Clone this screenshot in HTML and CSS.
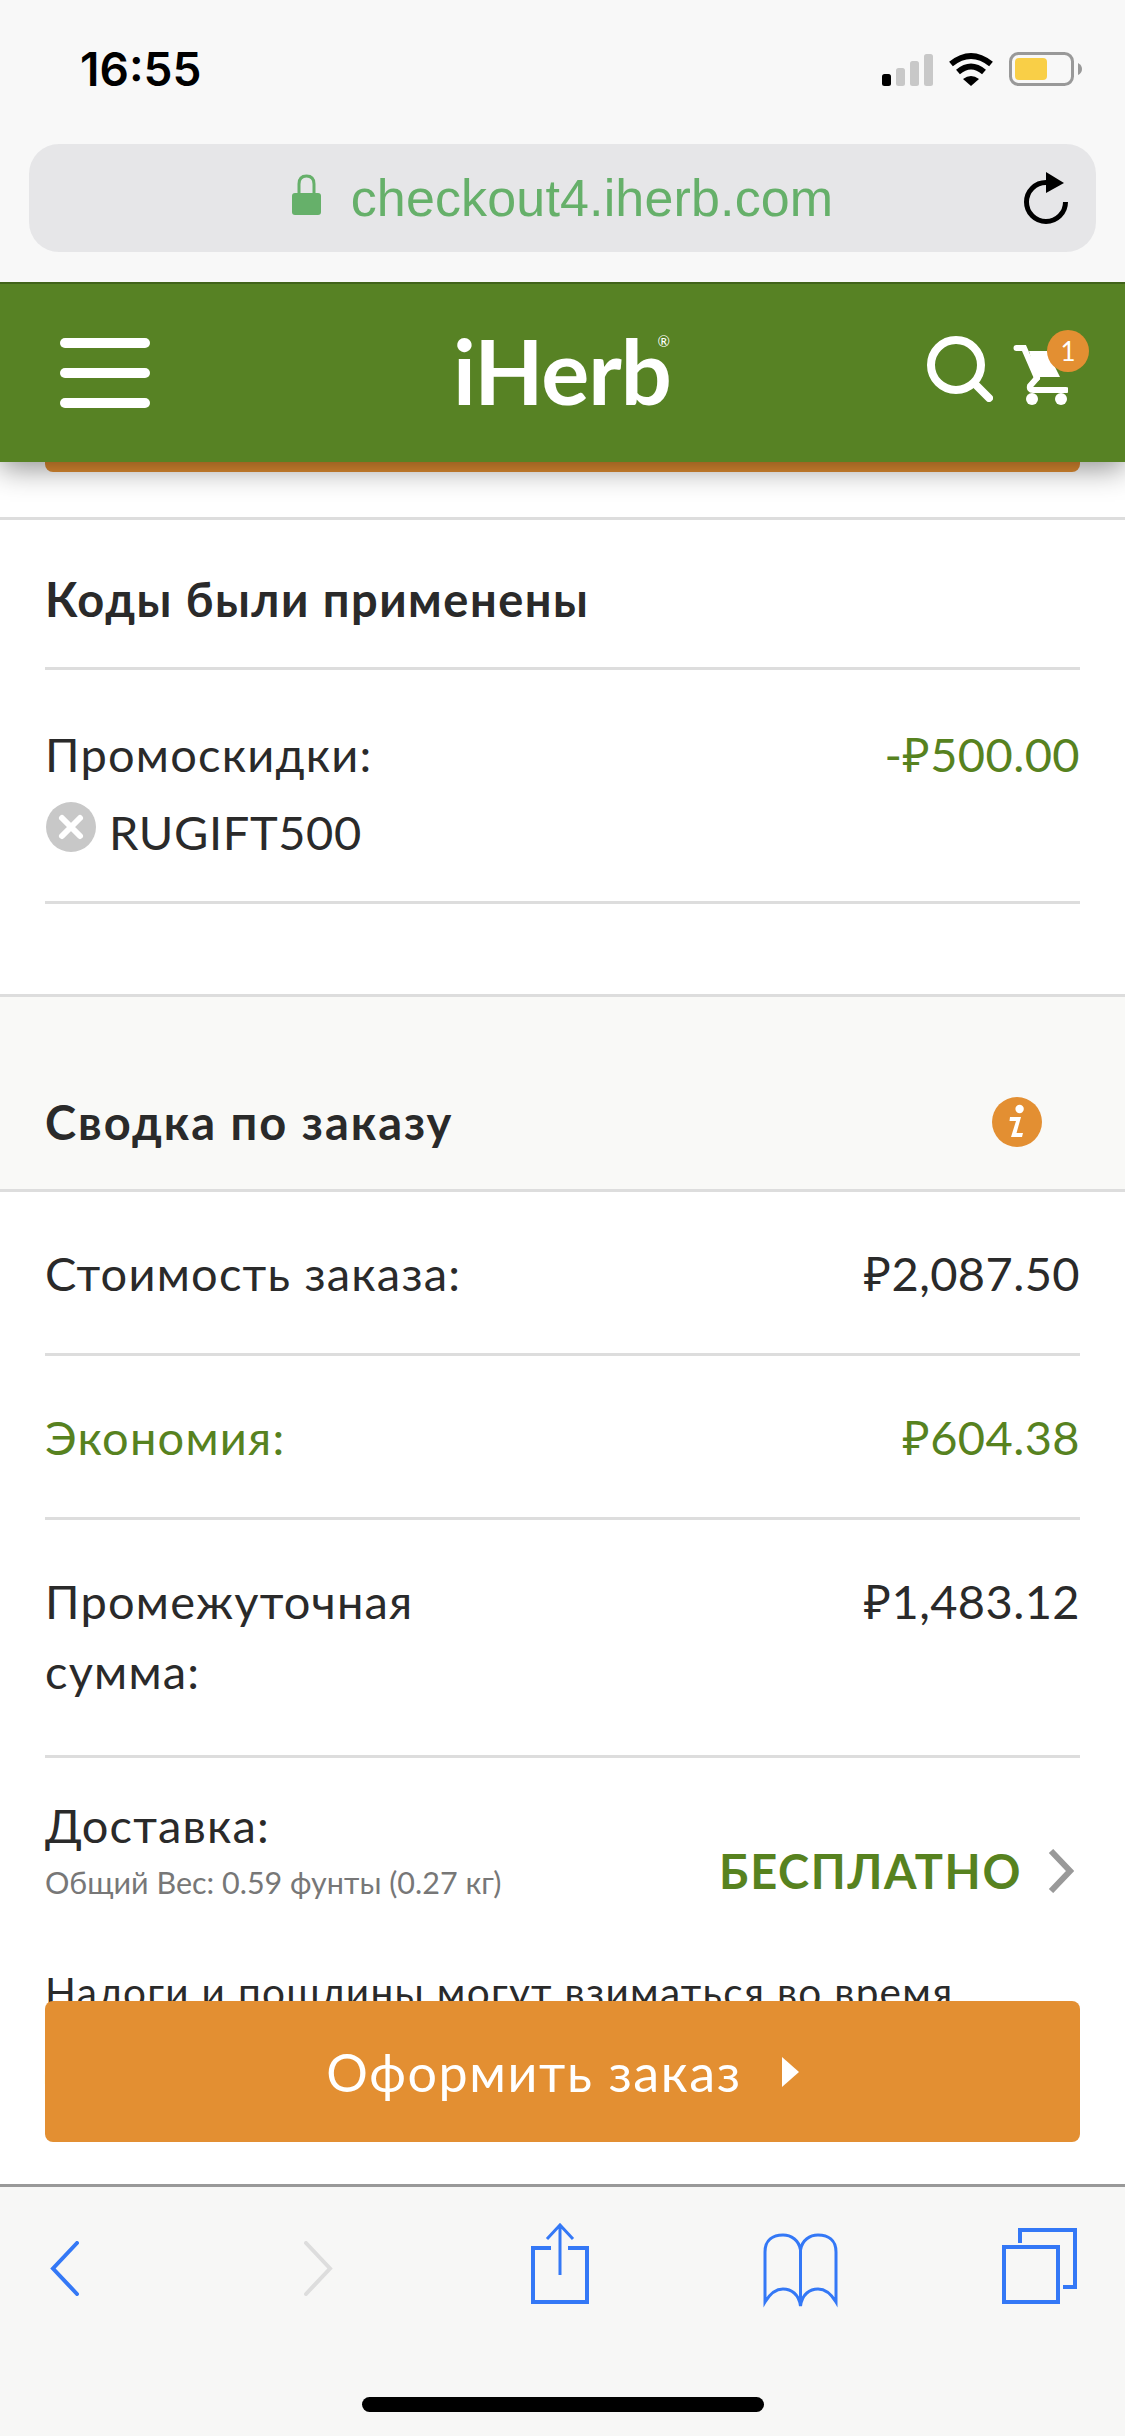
FILE: index.html
```html
<!DOCTYPE html>
<html lang="ru">
<head>
  <meta charset="UTF-8" />
  <meta name="viewport" content="width=device-width, initial-scale=1.0">
  <title>iHerb - Оформление заказа</title>
  <link rel="stylesheet" href="styles.css">
</head>
<body>
  <div class="phone">

    <!-- Barre du navigateur -->
    <div class="browser-top">
      <div class="status-bar">
        <span class="clock">16:55</span>
        <div class="status-icons">
          <svg width="51" height="32" viewBox="0 0 51 32">
            <rect x="0" y="20" width="9" height="12" rx="2.5" fill="#000"/>
            <rect x="14" y="14" width="9" height="18" rx="2.5" fill="#c8c8c8"/>
            <rect x="28" y="7" width="9" height="25" rx="2.5" fill="#c8c8c8"/>
            <rect x="42" y="0" width="9" height="32" rx="2.5" fill="#c8c8c8"/>
          </svg>
          <svg width="46" height="34" viewBox="0 0 46 34">
            <path d="M3 12 Q23 -4 43 12" fill="none" stroke="#000" stroke-width="6"/>
            <path d="M10 20 Q23 9 36 20" fill="none" stroke="#000" stroke-width="6"/>
            <path d="M15 27 Q23 21 31 27 L23 34 Z" fill="#000"/>
          </svg>
          <svg width="73" height="34" viewBox="0 0 73 34">
            <rect x="1.5" y="1.5" width="62" height="31" rx="8" fill="none" stroke="#999" stroke-width="3"/>
            <rect x="6" y="6" width="32" height="22" rx="4" fill="#f9cf47"/>
            <path d="M69 11 Q73 13 73 17 Q73 21 69 23 Z" fill="#999"/>
          </svg>
        </div>
      </div>
      <div class="url-bar">
        <div class="url">
          <svg class="lock" width="29" height="41" viewBox="0 0 29 41">
            <path d="M7 21 V10 Q7 2 14.5 2 Q22 2 22 10 V21" fill="none" stroke="#66b06a" stroke-width="3"/>
            <rect x="0" y="19" width="29" height="22" rx="3" fill="#66b06a"/>
          </svg>
          <span>checkout4.iherb.com</span>
        </div>
        <svg class="reload" width="48" height="54" viewBox="0 0 48 54">
          <path d="M24 10.5 A19.5 19.5 0 1 0 43.5 30" fill="none" stroke="#000" stroke-width="5"/>
          <path d="M24 0 L42 11 L24 21 Z" fill="#000"/>
        </svg>
      </div>
    </div>

    <!-- En-tete du site -->
    <header class="site-header">
      <div class="burger"><span></span><span></span><span></span></div>
      <div class="logo">iHerb<sup>®</sup></div>
      <div class="header-actions">
        <svg width="66" height="66" viewBox="0 0 66 66">
          <circle cx="29" cy="29" r="25" fill="none" stroke="#fff" stroke-width="8"/>
          <path d="M48 48 L62 62" stroke="#fff" stroke-width="8" stroke-linecap="round"/>
        </svg>
        <div class="cart">
          <svg width="56" height="62" viewBox="0 0 56 62">
            <path d="M4.5 3 H12 L25 33" fill="none" stroke="#fff" stroke-width="6" stroke-linecap="round"/>
            <path d="M17 6 H35 L48 32 H24 Z" fill="#fff"/>
            <path d="M25 33 L18 41 Q17 45 21 45 H54" fill="none" stroke="#fff" stroke-width="6" stroke-linecap="round"/>
            <circle cx="20" cy="54" r="6" fill="#fff"/>
            <circle cx="49" cy="54" r="6" fill="#fff"/>
          </svg>
          <span class="cart-badge">1</span>
        </div>
      </div>
    </header>

    <main class="content">
      <div class="peek-button"></div>

      <section class="codes">
        <h2 class="codes-title">Коды были применены</h2>
        <div class="promo">
          <div class="promo-text">
            <div class="label">Промоскидки:</div>
            <div class="promo-code">
              <svg width="50" height="50" viewBox="0 0 50 50">
                <circle cx="25" cy="25" r="25" fill="#c8c8c8"/>
                <path d="M16 16 L34 34 M34 16 L16 34" stroke="#fff" stroke-width="6" stroke-linecap="round"/>
              </svg>
              <span>RUGIFT500</span>
            </div>
          </div>
          <div class="green">-₽500.00</div>
        </div>
      </section>

      <section class="summary-head">
        <h2>Сводка по заказу</h2>
        <svg width="50" height="50" viewBox="0 0 50 50">
          <circle cx="25" cy="25" r="25" fill="#e38f32"/>
          <circle cx="27.6" cy="12" r="4.2" fill="#fff"/>
          <path d="M18 20 H29 L24.5 36 H31 L30 40 H19 L24 24 H17.5 Z" fill="#fff"/>
        </svg>
      </section>

      <div class="row">
        <span class="label">Стоимость заказа:</span>
        <span>₽2,087.50</span>
      </div>
      <div class="row green">
        <span class="label">Экономия:</span>
        <span>₽604.38</span>
      </div>
      <div class="row row-tall">
        <span class="label row-label">Промежуточная сумма:</span>
        <span>₽1,483.12</span>
      </div>
      <div class="shipping">
        <div>
          <div class="label">Доставка:</div>
          <div class="weight">Общий Вес: 0.59 фунты (0.27 кг)</div>
        </div>
        <div class="free">
          <span>БЕСПЛАТНО</span>
          <svg width="26" height="44" viewBox="0 0 26 44">
            <path d="M3 2 L22 22 L3 42" fill="none" stroke="#999" stroke-width="6"/>
          </svg>
        </div>
      </div>
      <p class="taxes">Налоги и пошлины могут взиматься во время доставки</p>

      <!-- Bouton par dessus le contenu -->
      <div class="checkout-wrap">
        <a class="checkout" href="#">Оформить заказ <i class="checkout-arrow"></i></a>
      </div>
    </main>

    <!-- Barre d'outils Safari -->
    <footer class="toolbar">
      <div class="toolbar-icons">
        <svg width="29" height="55" viewBox="0 0 29 55">
          <path d="M27 2 L3 27.5 L27 53" fill="none" stroke="#3478f6" stroke-width="4" stroke-linecap="round"/>
        </svg>
        <svg class="forward" width="29" height="55" viewBox="0 0 29 55">
          <path d="M2 2 L26 27.5 L2 53" fill="none" stroke="#ddd" stroke-width="4" stroke-linecap="round"/>
        </svg>
        <svg class="share" width="58" height="82" viewBox="0 0 58 82">
          <path d="M20 25 H2 V79 H56 V25 H37" fill="none" stroke="#3478f6" stroke-width="4"/>
          <path d="M29 2 V52 M16 16 L29 2 L42 16" fill="none" stroke="#3478f6" stroke-width="3"/>
        </svg>
        <svg class="book" width="75" height="76" viewBox="0 0 75 76">
          <path d="M37.5 18 C36 8 28 3 20 3 C10 3 2 8 2 20 V70 C8 60 14 57 20 57 C28 57 36 62 37.5 74 C39 62 47 57 55 57 C61 57 67 60 73 70 V20 C73 8 65 3 55 3 C47 3 39 8 37.5 18 V74" fill="none" stroke="#3478f6" stroke-width="3"/>
        </svg>
        <svg class="tabs" width="75" height="76" viewBox="0 0 75 76">
          <rect x="2" y="19" width="54" height="55" fill="none" stroke="#3478f6" stroke-width="4"/>
          <path d="M18 15 V2 H73 V59 H61" fill="none" stroke="#3478f6" stroke-width="4"/>
        </svg>
      </div>
      <div class="home-indicator"></div>
    </footer>
  </div>
</body>
</html>
```

FILE: styles.css
```css
* {
  box-sizing: border-box;
}

body {
  margin: 0;
  padding: 0;
  font-family: Lato, "Open Sans", "Noto Sans", sans-serif;
  font-size: 47px;
  letter-spacing: 0.4px;
  color: #2a2a2a;
  background: #fff;
}

svg {
  display: block;
  flex-shrink: 0;
}

.label {
  letter-spacing: 1.2px;
}

.phone {
  position: relative;
  width: 1125px;
  height: 2436px;
  overflow: hidden;
  display: flex;
  flex-direction: column;
}

/* Barre du navigateur */
.browser-top {
  position: relative;
  z-index: 3;
  height: 282px;
  padding: 52px 29px 0;
  background: #f8f8f8;
}

.status-bar {
  height: 34px;
  padding: 0 14px 0 51px;
  display: flex;
  justify-content: space-between;
  align-items: center;
}

.clock {
  font-family: Inter, "Liberation Sans", sans-serif;
  font-size: 46px;
  font-weight: 600;
  letter-spacing: 0;
  color: #000;
  line-height: 34px;
}

.status-icons {
  display: flex;
  align-items: flex-end;
  gap: 15px;
}

.url-bar {
  position: relative;
  height: 108px;
  margin-top: 58px;
  background: #e6e6e8;
  border-radius: 30px;
  display: flex;
  justify-content: center;
  align-items: center;
}

.url {
  display: flex;
  align-items: center;
  gap: 30px;
  font-family: "Liberation Sans", sans-serif;
  font-size: 52px;
  letter-spacing: 0.15px;
  color: #66b06a;
}

.lock {
  margin-top: -7px;
}

.reload {
  position: absolute;
  right: 26px;
  top: 28px;
}

/* En-tete */
.site-header {
  position: relative;
  z-index: 2;
  height: 180px;
  flex-shrink: 0;
  background: #578224;
  border-top: 2px solid #41631a;
  box-shadow: 0 6px 28px rgba(0, 0, 0, 0.45);
  display: flex;
  justify-content: space-between;
  align-items: flex-start;
  padding: 0 57px 0 60px;
}

.burger {
  width: 90px;
  margin-top: 54px;
  display: flex;
  flex-direction: column;
  gap: 20px;
}

.burger span {
  display: block;
  height: 10px;
  background: #fff;
  border-radius: 5px;
}

.logo {
  position: absolute;
  left: 453px;
  top: 31px;
  font-size: 90px;
  font-weight: 700;
  line-height: 110px;
  letter-spacing: -1px;
  color: #fff;
}

.logo sup {
  position: absolute;
  top: 16px;
  right: 1px;
  font-size: 15px;
  line-height: 20px;
  font-weight: 400;
  letter-spacing: 0;
}

.header-actions {
  display: flex;
  align-items: flex-start;
  gap: 19px;
  margin-top: 52px;
}

.cart {
  position: relative;
  margin-top: 9px;
}

.cart-badge {
  position: absolute;
  left: 35px;
  top: -15px;
  width: 42px;
  height: 42px;
  border-radius: 50%;
  background: #e38f32;
  color: #fff;
  font-size: 26px;
  letter-spacing: 0;
  line-height: 42px;
  text-align: center;
}

/* Contenu */
.content {
  position: relative;
  flex: 1;
  overflow: hidden;
}

.peek-button {
  height: 10px;
  margin: 0 45px;
  background: #e38f32;
  border-radius: 0 0 8px 8px;
}

.codes {
  margin-top: 45px;
  padding: 0 45px;
  border-top: 3px solid #ddd;
}

h2 {
  margin: 0;
  font-size: 47px;
  font-weight: 700;
  letter-spacing: 1.5px;
}

.codes-title {
  height: 150px;
  line-height: 158px;
  border-bottom: 3px solid #ddd;
}

.promo {
  height: 234px;
  padding-top: 49px;
  line-height: 70px;
  display: flex;
  justify-content: space-between;
  align-items: flex-start;
  border-bottom: 3px solid #ddd;
}

.promo-code {
  display: flex;
  align-items: center;
  gap: 13px;
  margin-top: 8px;
  margin-left: 1px;
  letter-spacing: 0.6px;
}

.promo-code svg {
  margin-top: -10px;
}

.green {
  color: #57821f;
}

.summary-head {
  margin-top: 90px;
  height: 198px;
  padding: 0 83px 0 45px;
  background: #f9f9f7;
  border-top: 3px solid #ddd;
  border-bottom: 3px solid #ddd;
  display: flex;
  justify-content: space-between;
  align-items: flex-end;
}

.summary-head h2 {
  line-height: 70px;
  margin-bottom: 32px;
  letter-spacing: 2px;
}

.summary-head svg {
  margin-bottom: 42px;
}

.row {
  margin: 0 45px;
  height: 164px;
  padding-top: 46px;
  line-height: 70px;
  display: flex;
  justify-content: space-between;
  align-items: flex-start;
  border-bottom: 3px solid #ddd;
}

.row-tall {
  height: 238px;
}

.row-label {
  width: 400px;
}

.shipping {
  margin: 0 45px;
  padding-top: 32px;
  display: flex;
  justify-content: space-between;
  line-height: 70px;
}

.weight {
  font-size: 30.5px;
  letter-spacing: 0;
  line-height: 44px;
  color: #777;
}

.free {
  display: flex;
  align-items: center;
  gap: 26px;
  margin-top: 51px;
  margin-right: 6px;
  height: 60px;
  font-weight: 700;
  color: #57821f;
  letter-spacing: 1.6px;
}

.taxes {
  margin: 53px 45px 0;
  font-size: 40.5px;
  letter-spacing: 1.3px;
  line-height: 70px;
}

.checkout-wrap {
  position: absolute;
  left: 0;
  right: 0;
  bottom: 42px;
  padding: 0 45px;
}

.checkout {
  height: 141px;
  background: #e38f32;
  border-radius: 8px;
  color: #fff;
  font-size: 52px;
  letter-spacing: 1.6px;
  text-decoration: none;
  display: flex;
  justify-content: center;
  align-items: center;
  gap: 40px;
}

.checkout-arrow {
  width: 0;
  height: 0;
  border-left: 17px solid #fff;
  border-top: 15px solid transparent;
  border-bottom: 15px solid transparent;
}

/* Barre d'outils */
.toolbar {
  height: 252px;
  flex-shrink: 0;
  background: #f7f7f6;
  border-top: 3px solid #999;
}

.toolbar-icons {
  position: relative;
  height: 120px;
  padding: 54px 0 0 50px;
  display: flex;
  align-items: flex-start;
}

.forward {
  margin-left: 225px;
}

.share {
  margin: -18px 0 0 198px;
}

.book {
  margin: -9px 0 0 174px;
}

.tabs {
  margin: -13px 0 0 164px;
}

.home-indicator {
  width: 402px;
  height: 15px;
  margin: 90px 0 0 362px;
  background: #000;
  border-radius: 8px;
}
```
